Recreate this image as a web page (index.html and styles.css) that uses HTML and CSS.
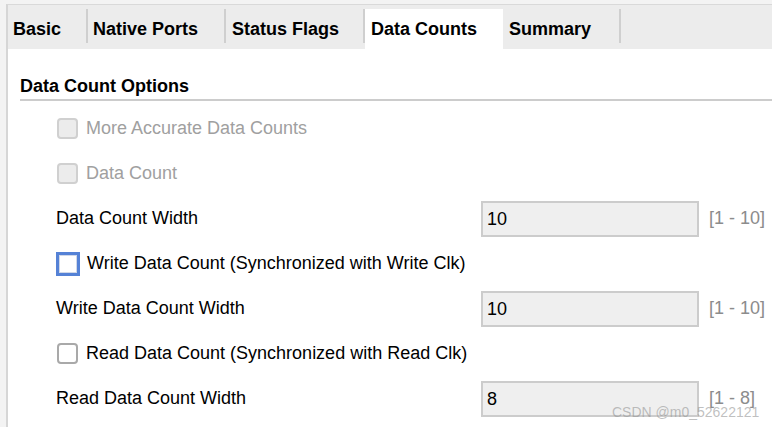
FILE: index.html
```html
<!DOCTYPE html>
<html>
<head>
<meta charset="utf-8">
<link rel="stylesheet" href="styles.css">
</head>
<body>
<div class="frame">
  <div class="panel">
    <div class="tabbar">
      <div class="tab tab-basic">Basic</div>
      <div class="tab tab-native">Native Ports</div>
      <div class="tab tab-status">Status Flags</div>
      <div class="tab tab-counts active">Data Counts</div>
      <div class="tab tab-summary">Summary</div>
    </div>
    <div class="content">
      <div class="section-title">Data Count Options</div>
      <div class="rows">
        <div class="row">
          <label class="check disabled"><span class="box"></span>More Accurate Data Counts</label>
        </div>
        <div class="row">
          <label class="check disabled"><span class="box"></span>Data Count</label>
        </div>
        <div class="row field">
          <span class="label">Data Count Width</span>
          <span class="input">10</span>
          <span class="range">[1 - 10]</span>
        </div>
        <div class="row">
          <label class="check"><span class="box focus"></span>Write Data Count (Synchronized with Write Clk)</label>
        </div>
        <div class="row field">
          <span class="label">Write Data Count Width</span>
          <span class="input">10</span>
          <span class="range">[1 - 10]</span>
        </div>
        <div class="row">
          <label class="check"><span class="box"></span>Read Data Count (Synchronized with Read Clk)</label>
        </div>
        <div class="row field">
          <span class="label">Read Data Count Width</span>
          <span class="input">8</span>
          <span class="range">[1 - 8]</span>
        </div>
      </div>
    </div>
  </div>
  <div class="watermark">CSDN @m0_52622121</div>
</div>
</body>
</html>
```

FILE: styles.css
```css
html, body {
  margin: 0;
  padding: 0;
  background: #f3f3f3;
  font-family: "Liberation Sans", Arial, sans-serif;
  color: #000;
}

.frame {
  position: relative;
  width: 772px;
  height: 427px;
  overflow: hidden;
  padding: 4px 0 0 6px;
  box-sizing: border-box;
}

.panel {
  border-top: 1px solid #d9d9d9;
  border-left: 2px solid #d6d6d6;
  background: #fff;
  height: 100%;
}

.tabbar {
  display: flex;
  background: #ececec;
  padding-top: 4px;
  height: 44px;
  box-sizing: border-box;
}

.tab {
  position: relative;
  height: 40px;
  line-height: 40px;
  font-size: 18px;
  font-weight: bold;
  padding-left: 5px;
  box-sizing: border-box;
  white-space: nowrap;
}

.tab::after {
  content: "";
  position: absolute;
  right: 0;
  top: 0;
  width: 2px;
  height: 34px;
  background: #cfcfcf;
}

.tab-basic { width: 80px; }
.tab-native { width: 138px; padding-left: 5px; }
.tab-status { width: 139px; padding-left: 6px; }
.tab-counts { width: 138px; padding-left: 6px; }
.tab-summary { width: 118px; padding-left: 6px; }

.tab.active {
  background: #fff;
}
.tab.active::after { display: none; }

.content {
  padding: 26px 0 0 12px;
}

.section-title {
  font-size: 18px;
  font-weight: bold;
  line-height: 22px;
  padding-bottom: 2px;
  border-bottom: 2px solid #cccccc;
}

.rows {
  padding: 5px 0 0 36px;
}

.row {
  height: 45px;
  display: flex;
  align-items: center;
  font-size: 18px;
}

.check {
  display: flex;
  align-items: center;
  gap: 8px;
  margin-left: 1px;
}

.check.disabled { color: #a0a0a0; }

.box {
  width: 21px;
  height: 21px;
  box-sizing: border-box;
  border: 2px solid #a9a9a9;
  border-radius: 4px;
  background: #fff;
}

.check.disabled .box {
  border-color: #d0d0d0;
  background: #ececec;
}

.box.focus {
  width: 24px;
  height: 24px;
  margin: 0 -1px 0 -1px;
  border: 3px solid #5582d6;
  border-radius: 0;
  box-shadow: inset 0 0 0 1px #d0d8e8;
}

.field .label {
  width: 425px;
}

.input {
  width: 218px;
  height: 36px;
  box-sizing: border-box;
  border: 2px solid #cccccc;
  background: #efefef;
  padding-left: 4px;
  line-height: 32px;
}

.range {
  margin-left: 10px;
  color: #8c8c8c;
}

.watermark {
  position: absolute;
  left: 612px;
  top: 404px;
  font-size: 14px;
  color: rgba(150, 150, 150, 0.6);
  white-space: nowrap;
}
```
